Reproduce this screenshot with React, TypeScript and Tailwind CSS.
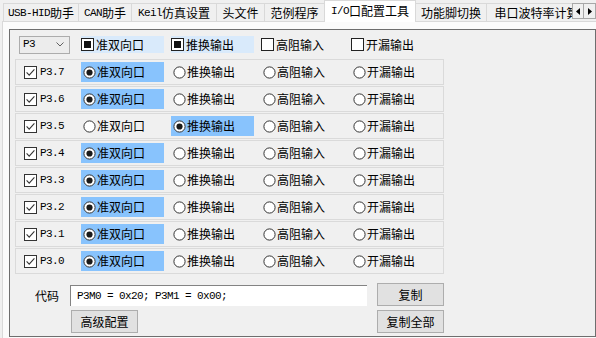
import React from 'react';

const MONO = "font-['Liberation_Mono',monospace] text-[11px] tracking-[-0.6px]";

function Mx({ s }: { s: string }) {
  const parts = s.split(/([\x20-\x7E]+)/).filter(Boolean);
  return (
    <>
      {parts.map((p, i) =>
        /^[\x20-\x7E]+$/.test(p) ? (
          <span key={i} className={`${MONO} whitespace-pre`}>{p}</span>
        ) : (
          <span key={i}>{p}</span>
        )
      )}
    </>
  );
}

const tabs = [
  { t: 'USB-HID助手', w: 'w-[76px]', first: true },
  { t: 'CAN助手', w: 'w-[53px]' },
  { t: 'Keil仿真设置', w: 'w-[85px]' },
  { t: '头文件', w: 'w-[48px]' },
  { t: '范例程序', w: 'w-[60px]' },
  { t: 'I/O口配置工具', w: 'w-[92px]', sel: true },
  { t: '功能脚切换', w: 'w-[71px]' },
  { t: '串口波特率计算', w: 'w-[100px]' },
];

const optsShown = ['准双向口', '推换输出', '高阻输入', '开漏输出'];

function Radio({ on }: { on: boolean }) {
  return (
    <svg width="13" height="13" viewBox="0 0 13 13" className="shrink-0">
      <circle cx="6.5" cy="6.5" r="5.6" fill="#ffffff" stroke="#333333" strokeWidth="1" />
      {on && <circle cx="6.5" cy="6.5" r="3.1" fill="#1a1a1a" />}
    </svg>
  );
}

function Check({ on }: { on: boolean }) {
  return (
    <svg width="13" height="13" viewBox="0 0 13 13" className="shrink-0">
      <rect x="0.5" y="0.5" width="12" height="12" fill="#ffffff" stroke="#333333" />
      {on && <path d="M2.6 6.4 L5.2 9.1 L10.4 3.4" fill="none" stroke="#333333" strokeWidth="1.1" />}
    </svg>
  );
}

function Square({ on }: { on: boolean }) {
  return (
    <svg width="13" height="13" viewBox="0 0 13 13" className="shrink-0">
      <rect x="0.5" y="0.5" width="12" height="12" fill="#ffffff" stroke="#222222" />
      {on && <rect x="3" y="3" width="7" height="7" fill="#111111" />}
    </svg>
  );
}

const rows = [
  { n: 'P3.7', s: 0 },
  { n: 'P3.6', s: 0 },
  { n: 'P3.5', s: 1 },
  { n: 'P3.4', s: 0 },
  { n: 'P3.3', s: 0 },
  { n: 'P3.2', s: 0 },
  { n: 'P3.1', s: 0 },
  { n: 'P3.0', s: 0 },
];

function Btn({ label, extra }: { label: string; extra?: string }) {
  return (
    <div
      className={`flex h-[23px] w-[67px] shrink-0 items-center justify-center border border-[#adadad] bg-[#e1e1e1] text-[12px] leading-[14px] text-black ${extra ?? ''}`}
    >
      {label}
    </div>
  );
}

export default function App() {
  return (
    <div className="h-[338px] w-[596px] overflow-hidden bg-[#f0f0f0] font-['Noto_Sans_CJK_SC',sans-serif] text-black">
      {/* tab strip */}
      <div className="flex h-[21px] items-end pl-[3px]">
        <div className="flex h-[21px] w-[569px] items-end overflow-visible">
          <div className="relative top-[1px] flex h-[22px] w-[569px] items-end overflow-hidden">
            {tabs.map((tb, i) =>
              tb.sel ? (
                <div
                  key={i}
                  className={`relative z-10 -ml-px flex h-[22px] shrink-0 items-center justify-center border-l border-r border-t border-[#d9d9d9] bg-[#ffffff] pb-[1px] text-[12px] leading-[14px] ${tb.w}`}
                >
                  <Mx s={tb.t} />
                </div>
              ) : (
                <div
                  key={i}
                  className={`mb-[1px] flex h-[18px] shrink-0 items-center justify-center whitespace-nowrap border-r border-t border-[#d9d9d9] bg-[#f0f0f0] text-[12px] leading-[14px] ${tb.first ? 'border-l' : ''} ${tb.w}`}
                >
                  <Mx s={tb.t} />
                </div>
              )
            )}
          </div>
        </div>
        <div className="mb-[2px] flex self-end">
          <div className="flex h-[16px] w-[12px] items-center justify-center border border-[#a8a8a8] bg-[#f0f0f0]">
            <svg width="4" height="7" viewBox="0 0 4 7"><path d="M4 0 L0 3.5 L4 7 Z" fill="#000" /></svg>
          </div>
          <div className="flex h-[16px] w-[12px] items-center justify-center border-y border-r border-[#a8a8a8] bg-[#f0f0f0]">
            <svg width="4" height="7" viewBox="0 0 4 7"><path d="M0 0 L4 3.5 L0 7 Z" fill="#000" /></svg>
          </div>
        </div>
      </div>

      {/* tab content */}
      <div className="ml-[2px] h-[317px] border-l border-t border-[#d9d9d9] bg-[#fbfbfb] pl-[6px] pt-[7px]">
        <div className="h-[308px] w-[587px] border border-[#6e6e6e] bg-[#f0f0f0]">
          {/* header row */}
          <div className="mt-[5px] flex h-[19px] items-center pl-[5px]">
            <div className="w-[66px] shrink-0">
              <div className="ml-[4px] flex h-[18px] w-[51px] items-center justify-between border border-[#acacac] bg-[#ececec] pl-[3px] pr-[5px]">
                <span className={MONO}>P3</span>
                <svg width="8" height="5" viewBox="0 0 8 5">
                  <path d="M0.5 0.5 L4 4 L7.5 0.5" fill="none" stroke="#606060" strokeWidth="1" />
                </svg>
              </div>
            </div>
            {optsShown.map((o, i) => (
              <div key={i} className="w-[90px] shrink-0">
                <div
                  className={`flex h-[17px] w-[83px] items-center gap-[2px] text-[12px] leading-[14px] ${i < 2 ? 'bg-[#d9eafb]' : ''}`}
                >
                  <Square on={i < 2} />
                  <span>{o}</span>
                </div>
              </div>
            ))}
          </div>

          {/* rows */}
          <div className="mt-[5px] flex flex-col gap-[1px] pl-[5px]">
            {rows.map((r) => (
              <div key={r.n} className="flex h-[26px] w-[429px] items-center border border-[#dadada]">
                <div className="flex w-[65px] shrink-0 items-center pl-[8px]">
                  <Check on />
                  <span className={`${MONO} ml-[3px] pt-[1px]`}>{r.n}</span>
                </div>
                {optsShown.map((o, i) => (
                  <div key={i} className="w-[90px] shrink-0">
                    <div
                      className={`flex h-[20px] w-[83px] items-center gap-[1px] pl-[2px] text-[12px] leading-[14px] ${r.s === i ? 'bg-[#88c3fd]' : ''}`}
                    >
                      <Radio on={r.s === i} />
                      <span>{o}</span>
                    </div>
                  </div>
                ))}
              </div>
            ))}
          </div>

          {/* code row */}
          <div className="mt-[9px] flex items-start">
            <div className="mt-[2px] flex h-[21px] w-[60px] shrink-0 items-center pl-[25px] text-[12px] leading-[14px]">
              代码
            </div>
            <div className="mt-[2px] flex h-[21px] w-[297px] shrink-0 items-center border-l border-t border-[#838383] bg-white pl-[6px]">
              <span className={`${MONO} whitespace-pre`}>P3M0 = 0x20; P3M1 = 0x00;</span>
            </div>
            <Btn label="复制" extra="ml-[10px]" />
          </div>
          <div className="mt-[4px] flex items-start pl-[61px]">
            <Btn label="高级配置" />
            <Btn label="复制全部" extra="ml-[239px]" />
          </div>
        </div>
      </div>
    </div>
  );
}
